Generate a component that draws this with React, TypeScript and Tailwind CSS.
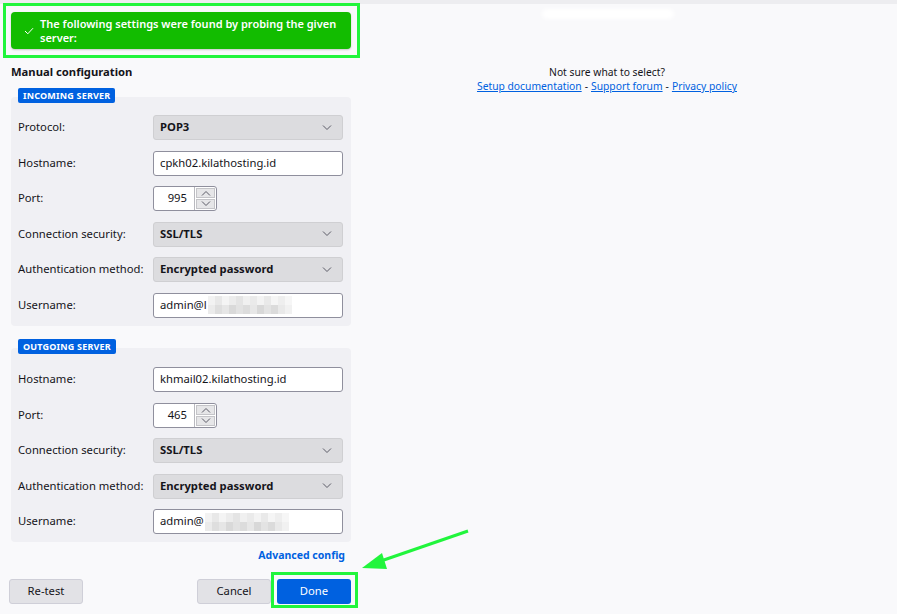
import React from "react";

const font = { fontFamily: '"Noto Sans", "Open Sans", sans-serif' };

function Chevron({ up = false, className = "" }: { up?: boolean; className?: string }) {
  return (
    <svg width="10" height="6" viewBox="0 0 10 6" className={className}>
      <path
        d={up ? "M1 5.5 L5 1.5 L9 5.5" : "M1 0.5 L5 4.5 L9 0.5"}
        fill="none"
        stroke="#5b5b66"
        strokeWidth="1"
      />
    </svg>
  );
}

function Select({ value }: { value: string }) {
  return (
    <div className="h-[25px] w-[190px] rounded-[3px] border border-[#cfcfd2] bg-[#dcdcdf] flex items-center justify-between pl-[6px] pr-[10px]">
      <span className="text-[11.25px] font-bold text-[#15141a]">{value}</span>
      <Chevron />
    </div>
  );
}

function TextInput({ value, masked }: { value: string; masked?: boolean }) {
  return (
    <div className="h-[25px] w-[190px] rounded-[3px] border border-[#8f8f9d] bg-white flex items-center pl-[6px]">
      <span className="text-[11.25px] text-[#15141a]">{value}</span>
      {masked && <Mosaic />}
    </div>
  );
}

const mosaicTop = [
  "bg-[#f2f2f2]", "bg-[#e8e8e8]", "bg-[#f4f4f4]", "bg-[#ececec]", "bg-[#e4e4e4]", "bg-[#f0f0f0]", "bg-[#eaeaea]", "bg-[#f3f3f3]", "bg-[#e9e9e9]", "bg-[#f5f5f5]", "bg-[#eeeeee]", "bg-[#f6f6f6]",
];
const mosaicBottom = [
  "bg-[#ebebeb]", "bg-[#dedede]", "bg-[#e6e6e6]", "bg-[#d9d9d9]", "bg-[#e2e2e2]", "bg-[#dcdcdc]", "bg-[#e7e7e7]", "bg-[#d8d8d8]", "bg-[#e3e3e3]", "bg-[#dbdbdb]", "bg-[#e9e9e9]", "bg-[#f1f1f1]",
];

function Mosaic() {
  return (
    <div className="flex flex-col ml-[1px]">
      <div className="flex">
        {mosaicTop.map((c, i) => (
          <div key={i} className={`w-[7px] h-[9px] ${c}`} />
        ))}
      </div>
      <div className="flex">
        {mosaicBottom.map((c, i) => (
          <div key={i} className={`w-[7px] h-[9px] ${c}`} />
        ))}
      </div>
    </div>
  );
}

function Spinner({ value }: { value: string }) {
  return (
    <div className="h-[25px] w-[64px] rounded-[3px] border border-[#8f8f9d] bg-white flex">
      <div className="w-[40px] flex items-center justify-end pr-[7px] text-[11.25px] text-[#15141a]">{value}</div>
      <div className="flex flex-col flex-1 border-l border-[#b9b9bf] p-[1px] gap-[1px]">
        <div className="flex-1 bg-[#e6e6e8] flex items-center justify-center border border-[#c4c4c8]">
          <Chevron up />
        </div>
        <div className="flex-1 bg-[#e6e6e8] flex items-center justify-center border border-[#c4c4c8]">
          <Chevron />
        </div>
      </div>
    </div>
  );
}

function Row({ label, children }: { label: string; children: React.ReactNode }) {
  return (
    <div className="flex items-center">
      <div className="w-[135px] text-[11.25px] text-[#15141a]">{label}</div>
      {children}
    </div>
  );
}

function Section({ title, children, pt }: { title: string; children: React.ReactNode; pt: string }) {
  return (
    <div className="flex flex-col">
      <div className="relative z-10 ml-[7px] self-start h-[15px] px-[5px] rounded-[2px] bg-[#0061e0] text-white text-[9px] font-bold leading-[15px] tracking-[0.2px]">
        {title}
      </div>
      <div className={`-mt-[6px] rounded-[4px] bg-[#f0f0f4] pl-[7px] pr-[8px] pb-[8px] flex flex-col gap-[10.6px] ${pt}`}>
        {children}
      </div>
    </div>
  );
}

export default function App() {
  return (
    <div className="relative w-[897px] h-[614px] bg-[#f9f9fb] overflow-hidden text-[#15141a]" style={font}>
      <div className="h-[4px] bg-[#ededf0]" />
      <div className="flex">
        <div className="w-[351px] pl-[11px] flex flex-col">
          <div className="mt-[8px] h-[37px] rounded-[4px] bg-[#12bc00] flex items-center pl-[13px] pr-[4px] shadow-[0_1px_2px_rgba(0,0,0,0.2)]">
            <svg width="10" height="8" viewBox="0 0 10 8" className="shrink-0">
              <path d="M1 4 L3.8 6.8 L9 1.2" fill="none" stroke="white" strokeWidth="1" />
            </svg>
            <div className="ml-[6px] text-white text-[11px] font-semibold leading-[14px]">
              The following settings were found by probing the given server:
            </div>
          </div>
          <div className="mt-[15px] text-[11.25px] font-bold leading-[16px]">Manual configuration</div>
          <div className="mt-[8px]">
            <Section title="INCOMING SERVER" pt="pt-[18px]">
              <Row label="Protocol:"><Select value="POP3" /></Row>
              <Row label="Hostname:"><TextInput value="cpkh02.kilathosting.id" /></Row>
              <Row label="Port:"><Spinner value="995" /></Row>
              <Row label="Connection security:"><Select value="SSL/TLS" /></Row>
              <Row label="Authentication method:"><Select value="Encrypted password" /></Row>
              <Row label="Username:"><TextInput value="admin@l" masked /></Row>
            </Section>
          </div>
          <div className="mt-[13px]">
            <Section title="OUTGOING SERVER" pt="pt-[19px]">
              <Row label="Hostname:"><TextInput value="khmail02.kilathosting.id" /></Row>
              <Row label="Port:"><Spinner value="465" /></Row>
              <Row label="Connection security:"><Select value="SSL/TLS" /></Row>
              <Row label="Authentication method:"><Select value="Encrypted password" /></Row>
              <Row label="Username:"><TextInput value="admin@" masked /></Row>
            </Section>
          </div>
          <div className="mt-[5px] flex justify-end pr-[6px] text-[10.5px] font-bold text-[#0061e0] leading-[16px]">
            Advanced config
          </div>
          <div className="mt-[16px] -ml-[2px] flex items-center">
            <button className="h-[25px] w-[74px] rounded-[3px] border border-[#cfcfd8] bg-[#e2e2e6] text-[11.25px] text-[#15141a]">
              Re-test
            </button>
            <div className="flex-1" />
            <button className="h-[25px] w-[74px] rounded-[3px] border border-[#cfcfd8] bg-[#e2e2e6] text-[11.25px] text-[#15141a]">
              Cancel
            </button>
            <button className="ml-[6px] h-[25px] w-[74px] rounded-[3px] bg-[#0061e0] text-[11.25px] text-white">
              Done
            </button>
          </div>
        </div>
        <div className="flex-1 pr-[34px] flex flex-col items-center pt-[61px] text-[10.3px] leading-[14px]">
          <div>Not sure what to select?</div>
          <div className="flex gap-[3px]">
            <span className="text-[#0061e0] underline">Setup documentation</span>
            <span>-</span>
            <span className="text-[#0061e0] underline">Support forum</span>
            <span>-</span>
            <span className="text-[#0061e0] underline">Privacy policy</span>
          </div>
        </div>
      </div>

      {/* redaction smudge */}
      <div className="absolute left-[542px] top-[9px] w-[132px] h-[10px] rounded-full bg-white blur-[2px]" />

      {/* annotation highlights */}
      <div className="absolute left-[3px] top-[3px] w-[357px] h-[55px] border-[3px] border-[#21f53c]" />
      <div className="absolute left-[271px] top-[572px] w-[87px] h-[36px] border-[3px] border-[#21f53c]" />
      <svg className="absolute left-0 top-0" width="897" height="614" viewBox="0 0 897 614">
        <line x1="468" y1="531" x2="378" y2="562" stroke="#21f53c" strokeWidth="3" />
        <polygon points="362,568 382,553 387,569" fill="#21f53c" />
      </svg>
    </div>
  );
}
